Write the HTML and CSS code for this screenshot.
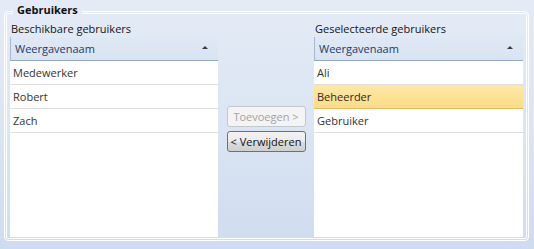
FILE: index.html
```html
<!DOCTYPE html>
<html lang="nl">
<head>
<meta charset="utf-8">
<title>Gebruikers</title>
<link rel="stylesheet" href="styles.css">
</head>
<body>
<fieldset class="group">
  <legend class="group-title">Gebruikers</legend>
  <div class="panes">
    <div class="pane">
      <div class="pane-label">Beschikbare gebruikers</div>
      <div class="list">
        <div class="list-header"><span>Weergavenaam</span><span class="sort-arrow"></span></div>
        <div class="row">Medewerker</div>
        <div class="row">Robert</div>
        <div class="row">Zach</div>
      </div>
    </div>
    <div class="actions">
      <button class="btn" disabled>Toevoegen &gt;</button>
      <button class="btn">&lt; Verwijderen</button>
    </div>
    <div class="pane">
      <div class="pane-label">Geselecteerde gebruikers</div>
      <div class="list">
        <div class="list-header"><span>Weergavenaam</span><span class="sort-arrow"></span></div>
        <div class="row">Ali</div>
        <div class="row selected">Beheerder</div>
        <div class="row">Gebruiker</div>
      </div>
    </div>
  </div>
</fieldset>
</body>
</html>
```
FILE: styles.css
```css
html, body {
  margin: 0;
  padding: 0;
}
body {
  width: 534px;
  height: 249px;
  overflow: hidden;
  background: linear-gradient(to bottom, #e4ebf6 0%, #dbe5f3 50%, #cfdcef 100%);
  font-family: "Open Sans", "Noto Sans", sans-serif;
  font-size: 11px;
  color: #1b1b1b;
  box-sizing: border-box;
  padding: 3px 5px 8px 4px;
}
.group {
  margin: 0;
  padding: 0 3px 1px 3px;
  border: 3px double #ffffff;
  border-radius: 4px;
  height: 238px;
  box-sizing: border-box;
}
.group-title {
  font-weight: bold;
  font-size: 11px;
  line-height: 14px;
  padding: 0 4px 4px 4px;
  margin-left: 3px;
  color: #111;
}
.panes {
  display: grid;
  grid-template-columns: 208px 96px 209px;
  height: 216px;
}
.pane {
  display: flex;
  flex-direction: column;
}
.pane-label {
  height: 16px;
  line-height: 16px;
  padding-left: 1px;
  color: #141414;
}
.list {
  flex: 1;
  background: #fff;
}
.list-header {
  height: 24px;
  box-sizing: border-box;
  display: flex;
  align-items: center;
  justify-content: space-between;
  padding: 0 10px 0 4px;
  background: linear-gradient(to bottom, #dfe8f5, #d9e4f2);
  border-left: 1px solid #a7b8d0;
  border-bottom: 1px solid #92a7c4;
  color: #1e3a66;
}
.sort-arrow {
  width: 0;
  height: 0;
  border-left: 3px solid transparent;
  border-right: 3px solid transparent;
  border-bottom: 3px solid #3b3b3b;
  margin-top: -2px;
}
.row {
  height: 24px;
  box-sizing: border-box;
  line-height: 23px;
  padding-left: 3px;
  border-bottom: 1px solid #dedede;
  color: #333;
}
.row.selected {
  background: linear-gradient(to bottom, #fde8a6, #fcdc86);
  border-bottom: 1px solid #e9bd57;
  color: #2a2a2a;
}
.actions {
  display: flex;
  flex-direction: column;
  align-items: center;
  justify-content: center;
  gap: 4px;
}
.btn {
  width: 79px;
  height: 21px;
  padding: 0;
  font-family: inherit;
  font-size: 11px;
  border: 1px solid #707070;
  border-radius: 3px;
  background: linear-gradient(to bottom, #f3f3f3 0%, #ebebeb 50%, #dddddd 51%, #cfcfcf 100%);
  color: #111;
}
.btn:disabled {
  border-color: #c2c8d0;
  background: #f4f4f4;
  color: #a3a3a3;
}
```
